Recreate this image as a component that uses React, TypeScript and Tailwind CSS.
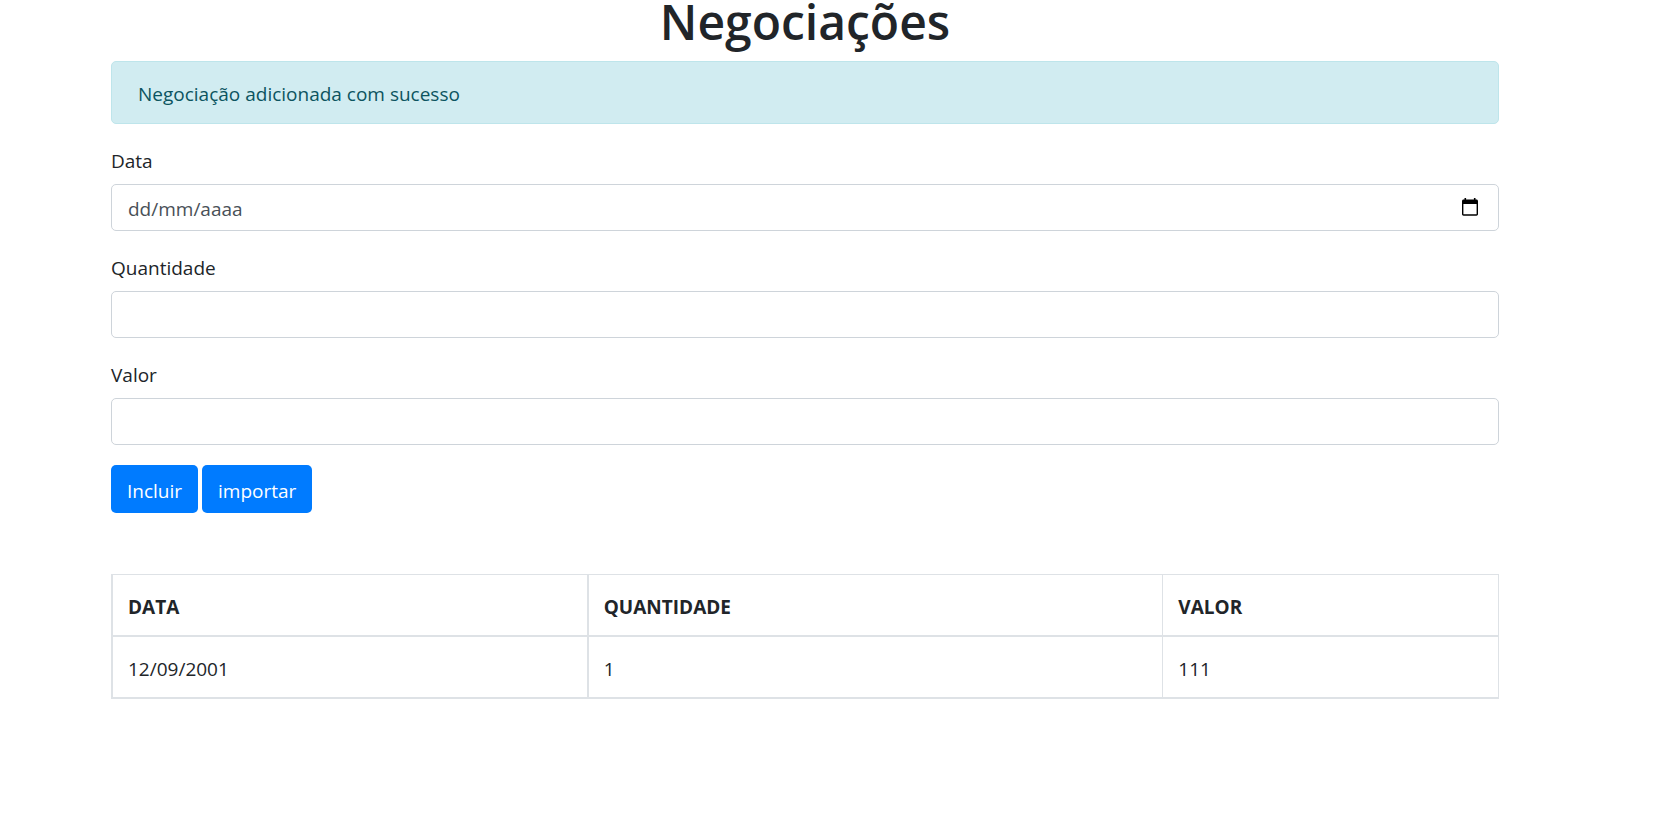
import React, { useState } from "react";

const inputClass =
  "block h-[47px] w-full rounded-[5px] border border-[#ced4da] bg-white px-4 pt-0.5 text-[19px] leading-[30px] text-[#495057] placeholder:text-[#495057] placeholder:opacity-100 outline-none focus:border-[#80bdff]";
const buttonClass =
  "h-12 rounded-[5px] bg-[#007bff] px-4 pt-1 text-[19px] leading-[30px] text-white hover:bg-[#0069d9]";
const cellClass = "border-b-2 border-l-2 border-[#dee2e6] px-[15px] pt-[17px] pb-[13px] last:border-l";

type Negociacao = { data: string; quantidade: number; valor: number };

const negociacoes: Negociacao[] = [{ data: "12/09/2001", quantidade: 1, valor: 111 }];

function Field({ id, label, children }: { id: string; label: string; children: React.ReactNode }) {
  return (
    <div className="mb-5">
      <label htmlFor={id} className="mb-2.5 block pt-1 text-[19px] leading-[26px]">
        {label}
      </label>
      {children}
    </div>
  );
}

function CalendarIcon() {
  return (
    <svg viewBox="0 0 16 18" className="h-[18px] w-4" fill="currentColor" aria-hidden="true">
      <path
        fillRule="evenodd"
        d="M2.5 0h1.6v1.6h7.8V0h1.6v1.6h.9c.9 0 1.6.7 1.6 1.6v12.9c0 .9-.7 1.6-1.6 1.6H1.6C.7 17.7 0 17 0 16.100V3.200c0-.9.7-1.600 1.600-1.600h.9zM1.400 6v10.300h13.200V6z"
      />
    </svg>
  );
}

export default function App() {
  const [data, setData] = useState("");
  return (
    <div className="min-h-screen bg-white pr-[65px] font-['Open_Sans','Noto_Sans',sans-serif] text-[#212529]">
      <main className="mx-auto max-w-[1388px]">
        <h1 className="mb-[17px] text-center text-[48px] leading-[44px] font-semibold">Negociações</h1>

        <div
          role="alert"
          className="mb-5 rounded-[5px] border border-[#bee5eb] bg-[#d1ecf1] px-[26px] pt-[17px] pb-[14px] text-[19px] leading-[30px] text-[#0c5460]"
        >
          Negociação adicionada com sucesso
        </div>

        <form onSubmit={(e) => e.preventDefault()}>
          <Field id="data" label="Data">
            <div className="relative">
              <input
                id="data"
                type="text"
                placeholder="dd/mm/aaaa"
                value={data}
                onChange={(e) => setData(e.target.value)}
                className={inputClass}
              />
              <button
                type="button"
                aria-label="Abrir calendário"
                className="absolute inset-y-0 right-[21px] flex items-center pb-0.5 text-black"
              >
                <CalendarIcon />
              </button>
            </div>
          </Field>
          <Field id="quantidade" label="Quantidade">
            <input id="quantidade" type="text" inputMode="numeric" className={inputClass} />
          </Field>
          <Field id="valor" label="Valor">
            <input id="valor" type="text" inputMode="decimal" className={inputClass} />
          </Field>
          <div className="flex gap-1">
            <button type="submit" className={buttonClass}>
              Incluir
            </button>
            <button type="button" className={buttonClass}>
              importar
            </button>
          </div>
        </form>

        <table className="mt-[61px] w-full table-fixed border-separate border-spacing-0 border-t border-r border-[#dee2e6] text-left text-[19px] leading-[30px]">
          <colgroup>
            <col className="w-[34.3%]" />
            <col className="w-[41.5%]" />
            <col />
          </colgroup>
          <thead>
            <tr>
              {["DATA", "QUANTIDADE", "VALOR"].map((t) => (
                <th key={t} scope="col" className={`${cellClass} font-bold`}>
                  {t}
                </th>
              ))}
            </tr>
          </thead>
          <tbody>
            {negociacoes.map((n) => (
              <tr key={n.data}>
                {[n.data, n.quantidade, n.valor].map((v, i) => (
                  <td key={i} className={cellClass}>
                    {v}
                  </td>
                ))}
              </tr>
            ))}
          </tbody>
        </table>
      </main>
    </div>
  );
}
